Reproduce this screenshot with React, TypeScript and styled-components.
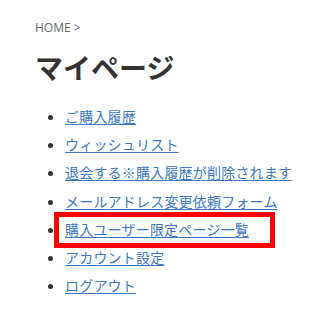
import React from "react";
import styled, { createGlobalStyle } from "styled-components";

const GlobalStyle = createGlobalStyle`
  html, body {
    margin: 0;
    padding: 0;
    background: #fff;
  }
  body {
    font-family: "Noto Sans CJK JP", "Noto Sans", sans-serif;
  }
`;

const Page = styled.div`
  width: 320px;
  height: 312px;
  padding: 20px 0 0 35px;
  box-sizing: border-box;
  overflow: hidden;
`;

const Breadcrumb = styled.div`
  font-family: "Open Sans", "Noto Sans", sans-serif;
  font-size: 12px;
  line-height: 16px;
  color: #666;
`;

const Title = styled.h1`
  margin: 11px 0 0;
  font-size: 28px;
  line-height: 40px;
  font-weight: 700;
  color: #333;
`;

const Menu = styled.ul`
  margin: 15px 0 0;
  padding: 0 0 0 30px;
  list-style: disc;
  color: #333;
`;

const Item = styled.li<{ $marked?: boolean }>`
  position: relative;
  font-size: 14px;
  line-height: 28.2px;
  letter-spacing: 0.2px;

  ${({ $marked }) =>
    $marked &&
    `
    &::after {
      content: "";
      position: absolute;
      left: -11px;
      top: -3px;
      width: 221px;
      height: 36px;
      border: 5px solid #ff0000;
      box-sizing: border-box;
      pointer-events: none;
    }
  `}
`;

const Link = styled.a`
  color: #3d79c2;
  text-decoration: underline;
  text-underline-offset: 2px;
`;

const links = [
  { label: "ご購入履歴" },
  { label: "ウィッシュリスト" },
  { label: "退会する※購入履歴が削除されます" },
  { label: "メールアドレス変更依頼フォーム" },
  { label: "購入ユーザー限定ページ一覧", marked: true },
  { label: "アカウント設定" },
  { label: "ログアウト" },
];

const App = () => (
  <Page>
    <GlobalStyle />
    <Breadcrumb>HOME &gt;</Breadcrumb>
    <Title>マイページ</Title>
    <Menu>
      {links.map(({ label, marked }) => (
        <Item key={label} $marked={marked}>
          <Link href="#">{label}</Link>
        </Item>
      ))}
    </Menu>
  </Page>
);

export default App;
